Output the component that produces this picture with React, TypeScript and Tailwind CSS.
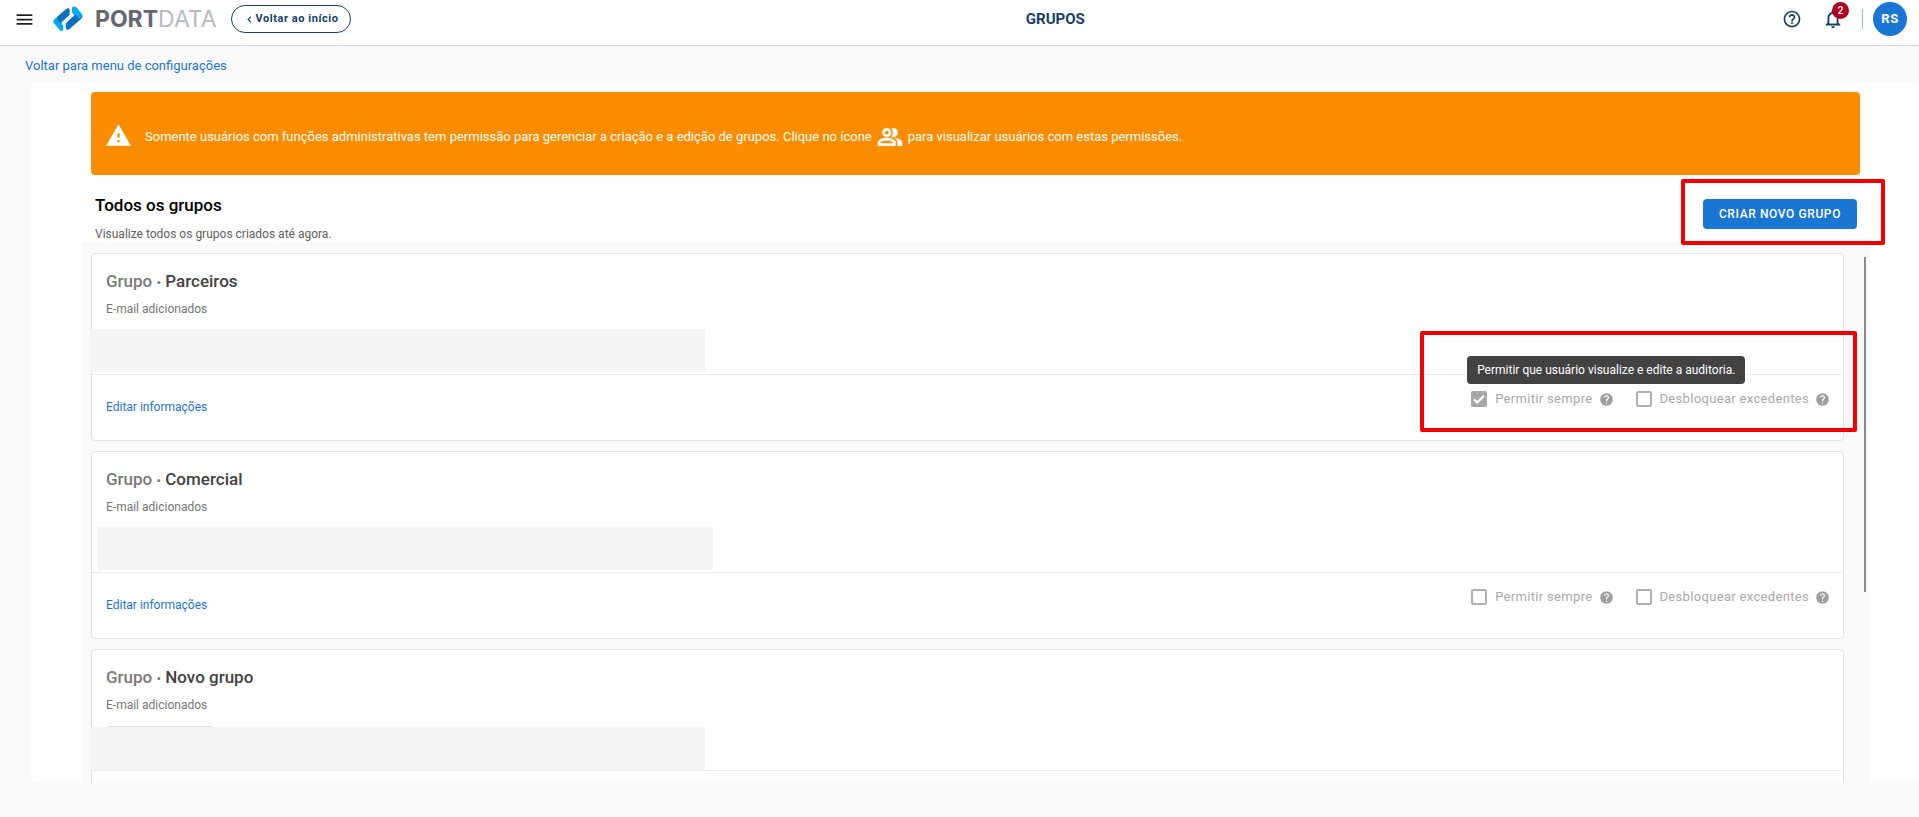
import React from 'react';
import clsx from 'clsx';
import { MdChevronLeft, MdHelp, MdHelpOutline, MdMenu, MdNotificationsNone, MdWarning } from 'react-icons/md';

interface Group {
  id: string;
  name: string;
  alwaysAllow: boolean;
  unlockExtra: boolean;
  emailsClassName: string;
  showChip?: boolean;
  highlighted?: boolean;
}

const groups: Group[] = [
  {
    id: 'parceiros',
    name: 'Parceiros',
    alwaysAllow: true,
    unlockExtra: false,
    emailsClassName: '-ml-4 mt-[10px]',
    highlighted: true,
  },
  {
    id: 'comercial',
    name: 'Comercial',
    alwaysAllow: false,
    unlockExtra: false,
    emailsClassName: '-ml-2 mt-[10px]',
  },
  {
    id: 'novo-grupo',
    name: 'Novo grupo',
    alwaysAllow: false,
    unlockExtra: false,
    emailsClassName: '-ml-4 mt-3',
    showChip: true,
  },
];

const Logo = () => (
  <div className="flex items-center gap-3">
    <svg viewBox="0 0 30 26" className="h-[26px] w-[30px]" aria-hidden="true">
      <path d="M4.500 10.500 L1.200 13.500 Q-0.500 15.200 1 17.200 L6.800 24.200 Q8.200 25.600 10.200 24.500 V19.500 Z" fill="#00aeef" />
      <path d="M4.200 10.700 L12.800 3.200 Q16.700 1 16.700 4.500 V8.800 L7.300 17.600 L3.800 13.500 Z" fill="#0b72bd" />
      <path d="M19 6.500 V1.600 Q21.500 -0.600 23.500 1.600 L28.800 8 Q30.200 10 28.800 11.800 L25.500 14.500 Z" fill="#00aeef" />
      <path d="M22.500 8.200 L26.500 12.500 L29 10 Q29.300 12 27.500 13.500 L16.500 23 Q12.800 25 12.800 21.500 V17.200 Z" fill="#0b72bd" />
    </svg>
    <span className="font-[Inter,sans-serif] text-[23px] leading-none text-[#b9b9c2]">
      <span className="font-bold text-[#66666f]">PORT</span>DATA
    </span>
  </div>
);

// Material "people_alt" with the person behind filled in
const PeopleIcon = ({ className }: { className?: string }) => (
  <svg
    viewBox="0 0 24 24"
    fill="currentColor"
    stroke="currentColor"
    strokeWidth="0.6"
    className={clsx('size-[26px]', className)}
    aria-hidden="true"
  >
    <path d="M16.67 13.13C18.04 14.06 19 15.32 19 17v3h4v-3c0-2.180-3.570-3.470-6.330-3.870z" />
    <path d="M15 12c2.210 0 4-1.790 4-4s-1.790-4-4-4c-.47 0-.91.1-1.330.24C14.500 5.270 15 6.580 15 8s-.5 2.730-1.330 3.760c.42.14.86.24 1.330.24z" />
    <path
      fillRule="evenodd"
      d="M9 12c2.210 0 4-1.790 4-4s-1.790-4-4-4-4 1.790-4 4 1.790 4 4 4zm0-6c1.100 0 2 .9 2 2s-.9 2-2 2-2-.9-2-2 .9-2 2-2z"
    />
    <path
      fillRule="evenodd"
      d="M9 13c-2.670 0-8 1.340-8 4v3h16v-3c0-2.660-5.330-4-8-4zm6 5H3v-.99C3.200 16.290 6.300 15 9 15s5.800 1.290 6 2v1z"
    />
  </svg>
);

const Header = () => (
  <header className="flex h-[46px] shrink-0 items-start border-b border-[#d0d0d0] bg-white pl-[14px] pr-3">
    <div className="flex h-[38px] items-center">
      <button type="button" aria-label="Menu" className="mr-[18px] text-[#212121]">
        <MdMenu size={21} />
      </button>
      <Logo />
      <button
        type="button"
        className="ml-[14px] flex h-7 items-center rounded-full border border-[#173f6b] px-[11px] text-[11px] font-bold tracking-wider text-[#173f6b]"
      >
        <MdChevronLeft size={13} />
        Voltar ao início
      </button>
    </div>
    <h1 className="flex-1 text-center text-[15px] leading-[38px] font-bold text-[#173f6b]">GRUPOS</h1>
    <div className="flex h-[37px] items-center pl-[22px] text-[#173f6b]">
      <button type="button" aria-label="Ajuda">
        <MdHelpOutline size={20} />
      </button>
      <button type="button" aria-label="Notificações" className="relative ml-5">
        <MdNotificationsNone size={22} />
        <span className="absolute -top-[6px] left-[10px] flex size-[17px] items-center justify-center rounded-full bg-[#b00020] text-[10px] font-medium text-white">
          2
        </span>
      </button>
      <span className="ml-[18px] h-5 w-px bg-[#90bfee]" />
      <button
        type="button"
        className="ml-[10px] size-[34px] rounded-full bg-[#1976d2] text-[13px] font-bold tracking-wider text-white"
      >
        RS
      </button>
    </div>
  </header>
);

interface PermissionProps {
  id: string;
  label: string;
  checked: boolean;
  tooltip?: string;
}

const Permission: React.FC<PermissionProps> = ({ id, label, checked, tooltip }) => (
  <div className="relative flex items-center">
    <input
      id={id}
      type="checkbox"
      defaultChecked={checked}
      disabled
      className="size-4 appearance-none rounded-[2px] border-2 border-[#b0b0b0] checked:border-[#a8a8a8] checked:bg-[#a8a8a8]"
    />
    {checked && (
      <svg viewBox="0 0 16 16" className="pointer-events-none absolute left-0 size-4" aria-hidden="true">
        <path d="M3 8.500 L6.300 11.500 L13 4.800" fill="none" stroke="#fff" strokeWidth="2" />
      </svg>
    )}
    <label htmlFor={id} className="ml-2 text-[13px] tracking-wide text-[#a8a8a8]">
      {label}
    </label>
    <MdHelp size={15} className="ml-[6px] text-[#9e9e9e]" />
    {tooltip && (
      <div
        role="tooltip"
        className="absolute bottom-full -left-1 z-10 mb-[5px] rounded bg-[#424242] px-[10px] py-1 text-xs leading-5 whitespace-nowrap text-white"
      >
        {tooltip}
      </div>
    )}
  </div>
);

const GroupCard = ({ group }: { group: Group }) => (
  <article className="h-[188px] shrink-0 rounded border border-[#e2e2e2] bg-white">
    <div className="h-[121px] border-b border-[#ececec] px-[14px] pt-[15px]">
      <h3 className="text-[17px] leading-6 font-medium text-[#424242]">
        <span className="text-[#7a7a7a]">
          Grupo <span className="text-[13px] leading-none">•</span>
        </span>{' '}
        {group.name}
      </h3>
      <p className="mt-[6px] text-xs leading-5 text-[#757575]">E-mail adicionados</p>
      <div className={clsx('relative h-[43px] w-[615px] max-w-full bg-[#f4f4f4]', group.emailsClassName)}>
        {group.showChip && <span className="absolute -top-px left-[18px] h-px w-[104px] bg-[#e0e0e0]" />}
      </div>
    </div>
    <div className="relative flex items-start justify-between pr-[13px] pl-[14px]">
      <a href="#editar" className="mt-[22px] text-xs leading-5 text-[#1976d2]">
        Editar informações
      </a>
      <div className="mt-[14px] flex h-5 items-center gap-[22px]">
        <Permission
          id={`${group.id}-permitir`}
          label="Permitir sempre"
          checked={group.alwaysAllow}
          tooltip={group.highlighted ? 'Permitir que usuário visualize e edite a auditoria.' : undefined}
        />
        <Permission id={`${group.id}-excedentes`} label="Desbloquear excedentes" checked={group.unlockExtra} />
      </div>
      {group.highlighted && (
        <div className="pointer-events-none absolute -top-11 -right-[14px] z-20 h-[101px] w-[437px] rounded-[2px] border-4 border-[#f40000]" />
      )}
    </div>
  </article>
);

const App: React.FC = () => {
  return (
    <div className="flex h-screen flex-col overflow-hidden bg-[#fafafa] pb-[34px] font-[Roboto,sans-serif]">
      <Header />
      <a href="#configuracoes" className="mt-[10px] mb-[6px] ml-[25px] self-start text-[13px] leading-5 text-[#1976d2]">
        Voltar para menu de configurações
      </a>

      <main className="ml-[31px] flex min-h-0 flex-1 flex-col rounded bg-white pt-[10px]">
        <div className="mr-[59px] ml-[60px] flex h-[83px] shrink-0 items-center rounded bg-[#fb8c00] px-[14px] pt-[3px] text-[13px] text-white">
          <MdWarning size={27} className="mr-[13px]" />
          <p className="flex items-center pt-[3px]">
            Somente usuários com funções administrativas tem permissão para gerenciar a criação e a edição de grupos.
            Clique no ícone
            <PeopleIcon className="mx-[5px]" />
            para visualizar usuários com estas permissões.
          </p>
        </div>

        <div className="mr-[62px] ml-16 flex shrink-0 items-start justify-between">
          <div className="pt-[18px]">
            <h2 className="text-[17px] leading-6 font-medium text-black">Todos os grupos</h2>
            <p className="mt-[9px] text-xs leading-4 text-[#616161]">Visualize todos os grupos criados até agora.</p>
          </div>
          <div className="relative mt-6">
            <button
              type="button"
              className="block h-[30px] rounded bg-[#1976d2] px-4 text-xs font-medium tracking-wider text-white"
            >
              CRIAR NOVO GRUPO
            </button>
            <div className="pointer-events-none absolute -top-5 -right-7 -bottom-4 -left-[22px] z-20 rounded-[2px] border-4 border-[#f40000]" />
          </div>
        </div>

        <section className="relative mr-[49px] ml-[51px] min-h-0 flex-1 bg-[#fafafa]">
          <div className="flex h-full flex-col gap-[10px] overflow-y-auto pt-[11px] pr-[26px] pl-[9px] [scrollbar-width:none]">
            {groups.map((group) => (
              <GroupCard key={group.id} group={group} />
            ))}
          </div>
          <span className="absolute top-[15px] right-1 h-[62%] w-[2px] bg-[#888888]" />
        </section>
      </main>
    </div>
  );
};

export default App;
